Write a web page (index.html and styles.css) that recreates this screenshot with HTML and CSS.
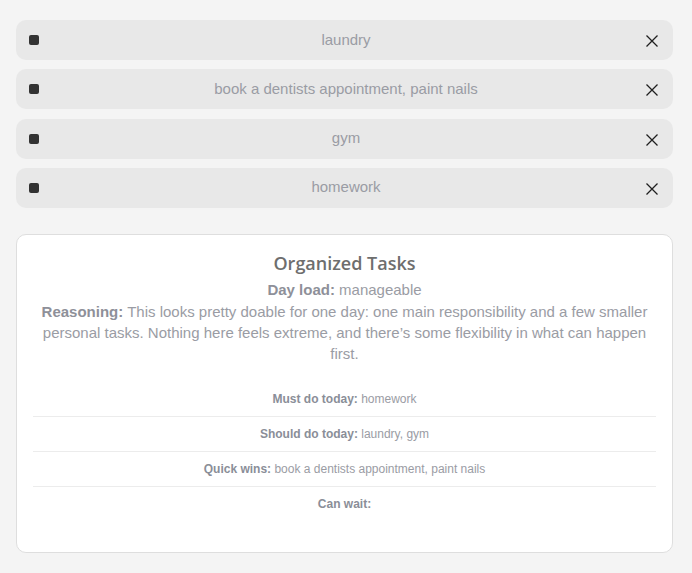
FILE: index.html
```html
<!DOCTYPE html>
<html>
<head>
<meta charset="utf-8">
<link rel="stylesheet" href="styles.css">
</head>
<body>
<div class="page">
  <ul class="tasks">
    <li class="task"><span class="bullet"></span><span class="task-text">laundry</span><button class="remove" aria-label="remove"><svg viewBox="0 0 14 14" width="14" height="14"><path d="M1.5 1.5L12.5 12.5M12.5 1.5L1.5 12.5"/></svg></button></li>
    <li class="task"><span class="bullet"></span><span class="task-text">book a dentists appointment, paint nails</span><button class="remove" aria-label="remove"><svg viewBox="0 0 14 14" width="14" height="14"><path d="M1.5 1.5L12.5 12.5M12.5 1.5L1.5 12.5"/></svg></button></li>
    <li class="task"><span class="bullet"></span><span class="task-text">gym</span><button class="remove" aria-label="remove"><svg viewBox="0 0 14 14" width="14" height="14"><path d="M1.5 1.5L12.5 12.5M12.5 1.5L1.5 12.5"/></svg></button></li>
    <li class="task"><span class="bullet"></span><span class="task-text">homework</span><button class="remove" aria-label="remove"><svg viewBox="0 0 14 14" width="14" height="14"><path d="M1.5 1.5L12.5 12.5M12.5 1.5L1.5 12.5"/></svg></button></li>
  </ul>
  <section class="card">
    <h2 class="card-title">Organized Tasks</h2>
    <p class="load"><b>Day load:</b> manageable</p>
    <p class="reason"><b>Reasoning:</b> This looks pretty doable for one day: one main responsibility and a few smaller personal tasks. Nothing here feels extreme, and there’s some flexibility in what can happen first.</p>
    <ul class="groups">
      <li class="group"><b>Must do today:</b> homework</li>
      <li class="group"><b>Should do today:</b> laundry, gym</li>
      <li class="group"><b>Quick wins:</b> book a dentists appointment, paint nails</li>
      <li class="group"><b>Can wait:</b> </li>
    </ul>
  </section>
</div>
</body>
</html>
```

FILE: styles.css
```css
* { box-sizing: border-box; }
html, body { margin: 0; padding: 0; }
body {
  background: #f4f4f4;
  font-family: "Liberation Sans", Arial, sans-serif;
  color: #9ca3af;
}
.page {
  padding: 20px 19px 0 16px;
}
.tasks {
  list-style: none;
  margin: 0;
  padding: 0;
  display: flex;
  flex-direction: column;
  gap: 9.3px;
}
.task {
  height: 40px;
  background: #e8e8e8;
  border-radius: 10px;
  display: flex;
  align-items: center;
  padding: 0 15px 0 13px;
}
.bullet {
  width: 10px;
  height: 10px;
  background: #333;
  border-radius: 2px;
  flex: none;
  margin-right: 8px;
}
.task-text {
  flex: 1;
  text-align: center;
  font-size: 15px;
  color: #9a9ca4;
  padding-bottom: 2px;
}
.remove {
  flex: none;
  background: none;
  border: none;
  padding: 0;
  width: 14px;
  height: 14px;
  display: flex;
  margin-top: 2px;
  margin-right: -1px;
}
.remove svg path {
  stroke: #1f1f1f;
  stroke-width: 1.3;
  fill: none;
}
.card {
  margin-top: 26px;
  background: #fff;
  border: 1px solid #dedede;
  border-radius: 10px;
  padding: 15px 16px 31px;
  text-align: center;
}
.card-title {
  margin: 0;
  font-family: "Open Sans", "Liberation Sans", sans-serif;
  font-weight: 600;
  font-size: 18px;
  line-height: 27px;
  color: #6e6e6e;
}
.load {
  margin: 2px 0 0;
}
.load, .reason {
  font-size: 15px;
  line-height: 21px;
  color: #9a9ca4;
}
.reason { margin: 1px 0 0; }
.load b, .reason b {
  color: #8e9099;
}
.groups {
  list-style: none;
  margin: 18px 0 0;
  padding: 0;
}
.group {
  font-size: 12px;
  line-height: 14px;
  padding: 10px 0 10px;
  border-bottom: 1px solid #ececec;
  color: #9a9ca4;
}
.group:last-child { border-bottom: none; }
.group b { color: #8a8e98; }
```
